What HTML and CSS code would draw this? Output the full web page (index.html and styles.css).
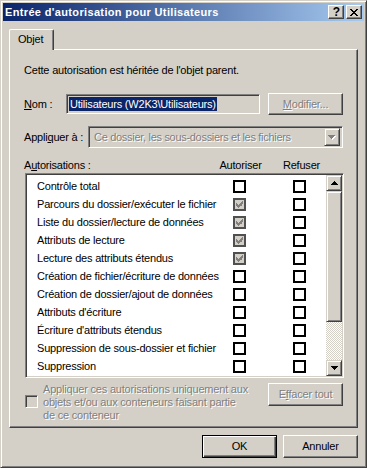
FILE: index.html
```html
<!DOCTYPE html>
<html lang="fr">
<head>
<meta charset="utf-8">
<title>Entrée d'autorisation pour Utilisateurs</title>
<link rel="stylesheet" href="styles.css">
</head>
<body>
<div class="window">
  <div class="titlebar">
    <span class="title">Entrée d'autorisation pour Utilisateurs</span>
    <div class="tbtns">
      <span class="tbtn help">?</span>
      <span class="tbtn close"><svg width="8" height="7" viewBox="0 0 8 7" shape-rendering="crispEdges"><path d="M0 0h2v1h-2zM6 0h2v1h-2zM1 1h2v1h-2zM5 1h2v1h-2zM2 2h4v1h-4zM3 3h2v1h-2zM2 4h4v1h-4zM1 5h2v1h-2zM5 5h2v1h-2zM0 6h2v1h-2zM6 6h2v1h-2z" fill="#000"/></svg></span>
    </div>
  </div>
  <div class="client">
    <div class="tabs"><div class="tab">Objet</div></div>
    <div class="panel">
      <p class="info">Cette autorisation est héritée de l'objet parent.</p>
      <div class="nomrow">
        <span class="lbl lbl-nom"><u>N</u>om :</span>
        <div class="edit sunken"><span class="sel">Utilisateurs (W2K3\Utilisateurs)</span></div>
        <span class="btn disabled modif"><span class="dtext"><u>M</u>odifier...</span></span>
      </div>
      <div class="applyrow">
        <span class="lbl lbl-apply">Appli<u>q</u>uer à :</span>
        <div class="combo sunken">
          <span class="ctext dtext">Ce dossier, les sous-dossiers et les fichiers</span>
          <span class="drop raised"><svg width="8" height="5" viewBox="0 0 8 5" shape-rendering="crispEdges"><path d="M1 1h7v1h-7zM2 2h5v1h-5zM3 3h3v1h-3zM4 4h1v1h-1z" fill="#fff"/><path d="M0 0h7v1h-7zM1 1h5v1h-5zM2 2h3v1h-3zM3 3h1v1h-1z" fill="#808080"/></svg></span>
        </div>
      </div>
      <div class="permhead">
        <span class="ph-name">A<u>u</u>torisations :</span>
        <span class="ph-col">Autoriser</span>
        <span class="ph-col">Refuser</span>
      </div>
      <div class="list sunken">
        <div class="items">
          <div class="row"><span class="rname">Contrôle total</span><span class="cb"></span><span class="cb cb2"></span></div>
          <div class="row"><span class="rname">Parcours du dossier/exécuter le fichier</span><span class="cb checked"><svg width="7" height="7" viewBox="0 0 7 7" shape-rendering="crispEdges"><path d="M6 0h1v3h-1zM5 1h1v4h-1zM4 2h1v3h-1zM3 3h1v3h-1zM2 4h1v3h-1zM1 3h1v3h-1zM0 2h1v3h-1z" fill="#808080"/></svg></span><span class="cb cb2"></span></div>
          <div class="row"><span class="rname">Liste du dossier/lecture de données</span><span class="cb checked"><svg width="7" height="7" viewBox="0 0 7 7" shape-rendering="crispEdges"><path d="M6 0h1v3h-1zM5 1h1v4h-1zM4 2h1v3h-1zM3 3h1v3h-1zM2 4h1v3h-1zM1 3h1v3h-1zM0 2h1v3h-1z" fill="#808080"/></svg></span><span class="cb cb2"></span></div>
          <div class="row"><span class="rname">Attributs de lecture</span><span class="cb checked"><svg width="7" height="7" viewBox="0 0 7 7" shape-rendering="crispEdges"><path d="M6 0h1v3h-1zM5 1h1v4h-1zM4 2h1v3h-1zM3 3h1v3h-1zM2 4h1v3h-1zM1 3h1v3h-1zM0 2h1v3h-1z" fill="#808080"/></svg></span><span class="cb cb2"></span></div>
          <div class="row"><span class="rname">Lecture des attributs étendus</span><span class="cb checked"><svg width="7" height="7" viewBox="0 0 7 7" shape-rendering="crispEdges"><path d="M6 0h1v3h-1zM5 1h1v4h-1zM4 2h1v3h-1zM3 3h1v3h-1zM2 4h1v3h-1zM1 3h1v3h-1zM0 2h1v3h-1z" fill="#808080"/></svg></span><span class="cb cb2"></span></div>
          <div class="row"><span class="rname">Création de fichier/écriture de données</span><span class="cb"></span><span class="cb cb2"></span></div>
          <div class="row"><span class="rname">Création de dossier/ajout de données</span><span class="cb"></span><span class="cb cb2"></span></div>
          <div class="row"><span class="rname">Attributs d'écriture</span><span class="cb"></span><span class="cb cb2"></span></div>
          <div class="row"><span class="rname">Écriture d'attributs étendus</span><span class="cb"></span><span class="cb cb2"></span></div>
          <div class="row"><span class="rname">Suppression de sous-dossier et fichier</span><span class="cb"></span><span class="cb cb2"></span></div>
          <div class="row"><span class="rname">Suppression</span><span class="cb"></span><span class="cb cb2"></span></div>
        </div>
        <div class="scroll">
          <span class="sbtn raised"><svg width="7" height="4" viewBox="0 0 7 4" shape-rendering="crispEdges"><path d="M3 0h1v1h-1zM2 1h3v1h-3zM1 2h5v1h-5zM0 3h7v1h-7z" fill="#000"/></svg></span>
          <span class="thumb raised"></span>
          <span class="track"></span>
          <span class="sbtn raised"><svg width="7" height="4" viewBox="0 0 7 4" shape-rendering="crispEdges"><path d="M0 0h7v1h-7zM1 1h5v1h-5zM2 2h3v1h-3zM3 3h1v1h-1z" fill="#000"/></svg></span>
        </div>
      </div>
      <div class="bottom">
        <span class="bcb sunken"></span>
        <span class="btext dtext">Appliquer ces autorisations uniquement aux<br>objets et/ou aux conteneurs faisant partie<br>de ce conteneur</span>
        <span class="btn disabled effacer"><span class="dtext">E<u>f</u>facer tout</span></span>
      </div>
    </div>
    <div class="actions">
      <span class="btn default">OK</span>
      <span class="btn">Annuler</span>
    </div>
  </div>
</div>
</body>
</html>
```

FILE: styles.css
```css
* { box-sizing: border-box; margin: 0; padding: 0; }
html, body { width: 367px; height: 468px; overflow: hidden; background: #d4d0c8; }
body {
  font-family: "Liberation Sans", Arial, sans-serif;
  font-size: 11px;
  line-height: 13px;
  letter-spacing: -0.2px;
  color: #000;
}
u { text-decoration: underline; text-underline-offset: 1px; }

.window {
  width: 367px; height: 468px;
  border: 1px solid;
  border-color: #d4d0c8 #404040 #404040 #d4d0c8;
  box-shadow: inset 1px 1px #fff, inset -1px -1px #808080;
  padding: 2px;
  display: flex; flex-direction: column;
}

.raised {
  border: 1px solid;
  border-color: #d4d0c8 #404040 #404040 #d4d0c8;
  box-shadow: inset 1px 1px #fff, inset -1px -1px #808080;
  background: #d4d0c8;
}
.sunken {
  border: 1px solid;
  border-color: #808080 #fff #fff #808080;
  box-shadow: inset 1px 1px #404040, inset -1px -1px #d4d0c8;
}

/* title bar */
.titlebar {
  height: 18px;
  background: linear-gradient(to right, #0a246a, #a6caf0);
  display: flex; align-items: center;
  padding: 0 2px 0 2px;
}
.title {
  flex: 1;
  color: #fff; font-weight: bold;
  letter-spacing: 0.35px;
}
.tbtns { display: flex; gap: 2px; }
.tbtn {
  width: 16px; height: 14px;
  display: flex; align-items: center; justify-content: center;
  border: 1px solid;
  border-color: #fff #404040 #404040 #fff;
  box-shadow: inset -1px -1px #808080;
  background: #d4d0c8;
}
.help { font-weight: bold; font-size: 12px; letter-spacing: 0; padding-left: 1px; }

/* client */
.client { flex: 1; padding: 8px 6px 0 6px; display: flex; flex-direction: column; }
.tabs { height: 20px; display: flex; }
.tab {
  position: relative; z-index: 1;
  width: 45px; height: 21px; margin-bottom: -1px;
  background: #d4d0c8;
  border-top: 1px solid #fff; border-left: 1px solid #fff; border-right: 1px solid #404040;
  box-shadow: inset -1px 0 #808080;
  border-radius: 2px 2px 0 0;
  padding: 3px 0 0 8px;
}
.panel {
  height: 379px;
  border: 1px solid;
  border-color: #fff #404040 #404040 #fff;
  box-shadow: inset -1px -1px #808080;
  padding: 14px 14px 0 14px;
  display: flex; flex-direction: column;
}
.info { height: 13px; }

.nomrow { margin-top: 16px; height: 22px; display: flex; align-items: center; }
.lbl-nom { width: 42px; }
.edit {
  width: 194px; height: 20px; margin-right: 8px;
  padding: 2px 0 0 2px;
  background: #d4d0c8;
}
.sel { display: inline-block; background: #0a246a; color: #fff; line-height: 14px; padding: 0 1px 0 1px; }
.btn {
  width: 75px; height: 23px;
  display: flex; align-items: center; justify-content: center;
  border: 1px solid;
  border-color: #fff #404040 #404040 #fff;
  box-shadow: inset -1px -1px #808080;
  background: #d4d0c8;
}
.modif { height: 22px; }
.dtext { color: #808080; text-shadow: 1px 1px 0 #fff; }

.applyrow { margin-top: 11px; height: 22px; display: flex; align-items: center; }
.lbl-apply { width: 64px; }
.combo {
  width: 255px; height: 22px;
  display: flex; align-items: center;
  padding: 2px 2px 2px 5px;
  background: #d4d0c8;
}
.ctext { flex: 1; letter-spacing: -0.3px; }
.drop { width: 16px; height: 18px; display: flex; align-items: center; justify-content: center; }

.permhead { margin-top: 11px; height: 13px; display: flex; }
.ph-name { width: 186px; }
.ph-col { width: 61px; text-align: center; }

.list {
  margin-top: 1px; margin-left: 1px;
  width: 319px; height: 205px;
  background: #fff;
  display: flex;
}
.items { flex: 1; padding-top: 3px; }
.row { height: 18px; display: flex; align-items: center; padding-left: 11px; }
.rname { width: 196px; white-space: nowrap; }
.cb {
  width: 13px; height: 13px;
  border: 2px solid #000;
  background: #fff;
  display: flex; align-items: center; justify-content: center;
}
.cb2 { margin-left: 47px; }
.cb.checked { border-color: #505050; background: #d4d0c8; }

.scroll { width: 16px; display: flex; flex-direction: column; margin: 1px 1px 1px 0; }
.sbtn { height: 16px; display: flex; align-items: center; justify-content: center; }
.thumb { height: 131px; }
.track {
  flex: 1;
  background-color: #d4d0c8;
  background-image: conic-gradient(#fff 25%, #d4d0c8 0 50%, #fff 0 75%, #d4d0c8 0);
  background-size: 2px 2px;
}

.bottom { margin-top: 5px; display: flex; align-items: flex-start; }
.bcb { width: 13px; height: 13px; margin: 12px 0 0 1px; background: #d4d0c8; }
.btext { margin-left: 5px; width: 225px; white-space: nowrap; }
.effacer { margin-left: auto; }

.actions { margin-top: 7px; display: flex; justify-content: flex-end; gap: 6px; }
.default {
  border: 1px solid #000;
  box-shadow: inset 1px 1px #fff, inset -1px -1px #404040, inset -2px -2px #808080;
}
```
